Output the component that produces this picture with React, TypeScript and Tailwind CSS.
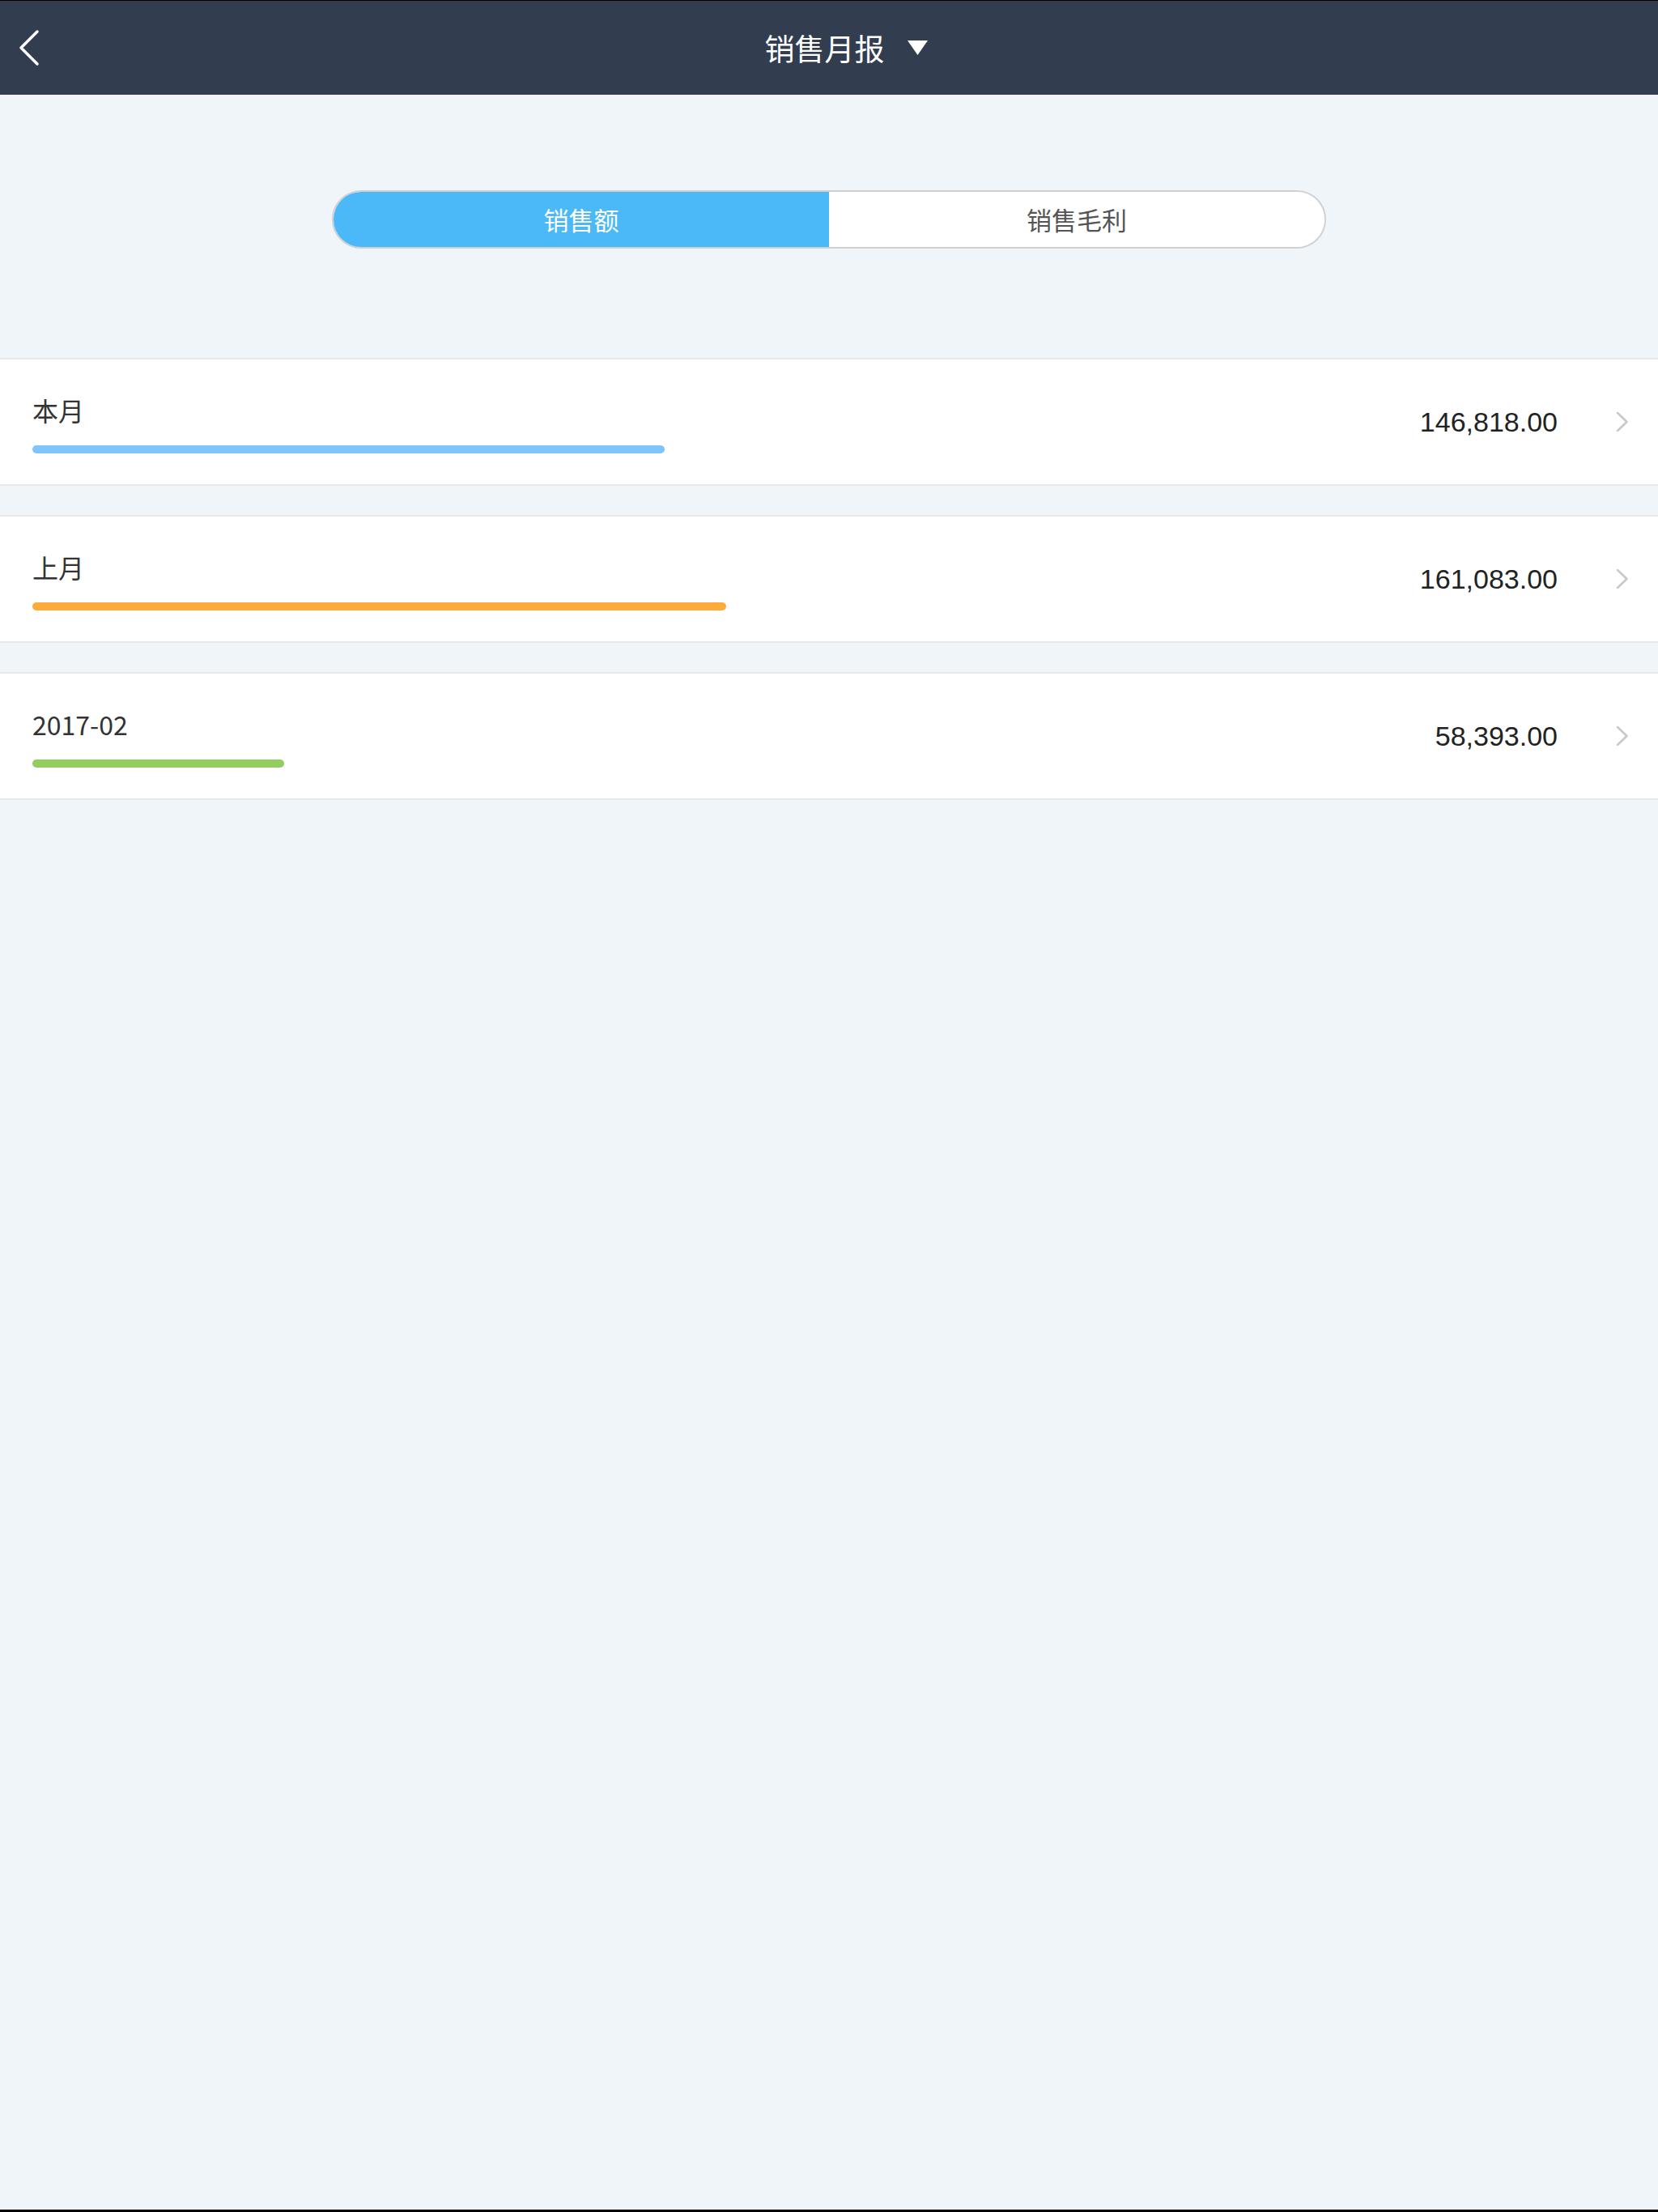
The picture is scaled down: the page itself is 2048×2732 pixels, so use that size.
import React from "react";

const rows = [
  { label: "本月", value: 146818, color: "bg-[#7fc5fd]" },
  { label: "上月", value: 161083, color: "bg-[#fcaa3a]" },
  { label: "2017-02", value: 58393, color: "bg-[#94cd5f]" },
];

const MAX = 161083;
const MAX_W = 857;

function fmt(n: number) {
  return n.toLocaleString("en-US", { minimumFractionDigits: 2, maximumFractionDigits: 2 });
}

export default function App() {
  return (
    <div
      className="min-h-[2732px] w-[2048px] bg-[#f0f5fa] flex flex-col"
      style={{ fontFamily: '"Noto Sans CJK SC", "Noto Sans", sans-serif' }}
    >
      <header className="h-[117px] border-t border-black bg-[#323e4f] grid grid-cols-[1fr_auto_1fr] items-center">
        <div className="pl-[23px] flex items-center">
          <svg width="26" height="46" viewBox="0 0 26 46" fill="none">
            <polyline points="23,3 3,23 23,43" stroke="#ffffff" strokeWidth="3.5" strokeLinecap="round" strokeLinejoin="round" />
          </svg>
        </div>
        <div className="flex items-center">
          <div className="w-[42px]" />
          <span className="text-[37px] leading-[40px] text-white">销售月报</span>
          <svg className="ml-[28px]" width="25" height="18" viewBox="0 0 25 18">
            <polygon points="0,0 25,0 12.5,18" fill="#ffffff" />
          </svg>
        </div>
        <div />
      </header>

      <div className="mt-[118px] mx-auto w-[1228px] h-[72px] rounded-full border-2 border-[#d0d0d0] overflow-hidden flex">
        <div className="flex-1 bg-[#4bb8f7] flex items-center justify-center text-[31px] text-white">销售额</div>
        <div className="flex-1 bg-white flex items-center justify-center text-[31px] text-[#555555]">销售毛利</div>
      </div>

      <div className="mt-[135px] flex flex-col gap-[36px]">
        {rows.map((r) => (
          <div key={r.label} className="h-[158px] bg-white border-y-2 border-[#e8e8e8] flex pl-[40px] pr-[36px]">
            <div className="flex-1 flex flex-col pt-[44px]">
              <span className="text-[32px] leading-[36px] text-[#333333]">{r.label}</span>
              <div
                className={`mt-[26px] h-[10px] rounded-full ${r.color}`}
                style={{ width: `${Math.round((r.value / MAX) * MAX_W)}px` }}
              />
            </div>
            <div className="flex items-center">
              <span
                className="text-[34px] text-[#222222]"
                style={{ fontFamily: '"Liberation Sans", Arial, sans-serif' }}
              >
                {fmt(r.value)}
              </span>
              <svg className="ml-[72px]" width="16" height="26" viewBox="0 0 16 26" fill="none">
                <polyline points="2,2 13.5,13 2,24" stroke="#c7c7cc" strokeWidth="2.5" strokeLinecap="round" strokeLinejoin="round" />
              </svg>
            </div>
          </div>
        ))}
      </div>

      <div className="flex-1" />
      <div className="h-[3px] bg-black" />
    </div>
  );
}
